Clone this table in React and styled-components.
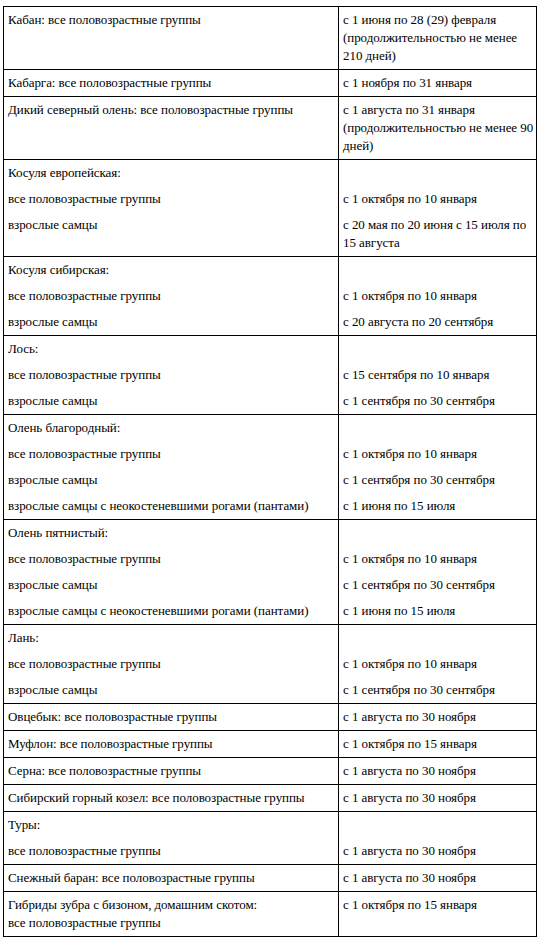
import React from "react";
import styled, { createGlobalStyle } from "styled-components";

const Global = createGlobalStyle`
  html, body { margin: 0; padding: 0; background: #fff; }
  body { font-family: "Liberation Serif", "Times New Roman", serif; color: #000; }
`;

const Page = styled.div`
  padding: 6px 0 0 3px;
`;

const Table = styled.table`
  width: 534px;
  border-collapse: collapse;
  table-layout: fixed;
  font-size: 13px;
  line-height: 18px;
  letter-spacing: -0.06px;
`;

const Cell = styled.td`
  border: 1px solid #000;
  padding: 4px 2px 4px 4px;
  vertical-align: top;
`;

const Para = styled.p`
  margin: 0 0 8px;
  min-height: 18px;
  &:last-child { margin-bottom: 0; }
`;

const rows = [
  [["Кабан: все половозрастные группы"], ["с 1 июня по 28 (29) февраля (продолжительностью не менее 210 дней)"]],
  [["Кабарга: все половозрастные группы"], ["с 1 ноября по 31 января"]],
  [["Дикий северный олень: все половозрастные группы"], ["с 1 августа по 31 января (продолжительностью не менее 90 дней)"]],
  [["Косуля европейская:", "все половозрастные группы", "взрослые самцы"], ["", "с 1 октября по 10 января", "с 20 мая по 20 июня с 15 июля по 15 августа"]],
  [["Косуля сибирская:", "все половозрастные группы", "взрослые самцы"], ["", "с 1 октября по 10 января", "с 20 августа по 20 сентября"]],
  [["Лось:", "все половозрастные группы", "взрослые самцы"], ["", "с 15 сентября по 10 января", "с 1 сентября по 30 сентября"]],
  [["Олень благородный:", "все половозрастные группы", "взрослые самцы", "взрослые самцы с неокостеневшими рогами (пантами)"], ["", "с 1 октября по 10 января", "с 1 сентября по 30 сентября", "с 1 июня по 15 июля"]],
  [["Олень пятнистый:", "все половозрастные группы", "взрослые самцы", "взрослые самцы с неокостеневшими рогами (пантами)"], ["", "с 1 октября по 10 января", "с 1 сентября по 30 сентября", "с 1 июня по 15 июля"]],
  [["Лань:", "все половозрастные группы", "взрослые самцы"], ["", "с 1 октября по 10 января", "с 1 сентября по 30 сентября"]],
  [["Овцебык: все половозрастные группы"], ["с 1 августа по 30 ноября"]],
  [["Муфлон: все половозрастные группы"], ["с 1 октября по 15 января"]],
  [["Серна: все половозрастные группы"], ["с 1 августа по 30 ноября"]],
  [["Сибирский горный козел: все половозрастные группы"], ["с 1 августа по 30 ноября"]],
  [["Туры:", "все половозрастные группы"], ["", "с 1 августа по 30 ноября"]],
  [["Снежный баран: все половозрастные группы"], ["с 1 августа по 30 ноября"]],
];

export default function App() {
  return (
    <Page>
      <Global />
      <Table>
        <colgroup>
          <col style={{ width: 335 }} />
          <col />
        </colgroup>
        <tbody>
          {rows.map((r, i) => (
            <tr key={i}>
              {r.map((cell, j) => (
                <Cell key={j}>
                  {cell.map((t, k) => (
                    <Para key={k}>{t}</Para>
                  ))}
                </Cell>
              ))}
            </tr>
          ))}
          <tr>
            <Cell>
              <Para>
                Гибриды зубра с бизоном, домашним скотом:
                <br />
                все половозрастные группы
              </Para>
            </Cell>
            <Cell>
              <Para>с 1 октября по 15 января</Para>
            </Cell>
          </tr>
        </tbody>
      </Table>
    </Page>
  );
}
